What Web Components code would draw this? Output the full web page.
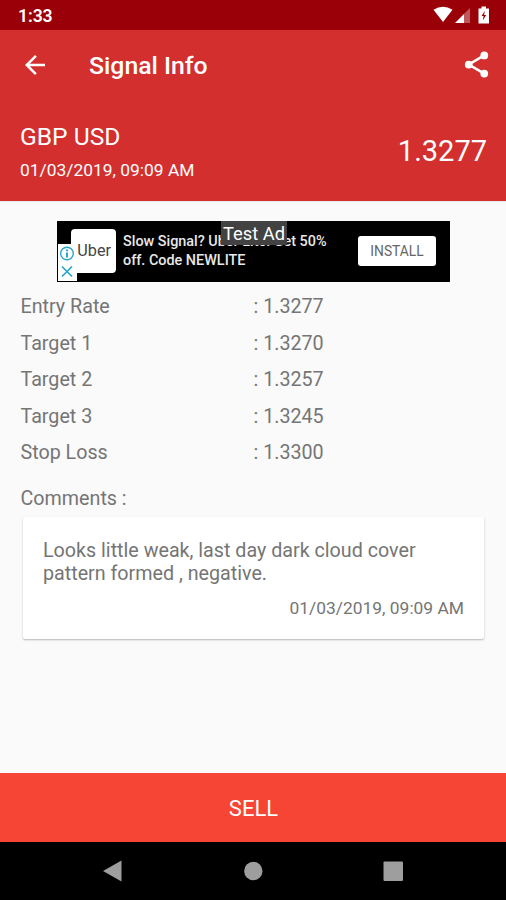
<!DOCTYPE html>
<html lang="en">
<head>
<meta charset="utf-8">
<title>Signal Info</title>
<style>
  html, body {
    margin: 0;
    height: 100%;
    overflow: hidden;
  }

  body {
    font-family: Roboto, "Liberation Sans", sans-serif;
    --color-primary: #d32f2f;
    --color-primary-dark: #9a0007;
    --color-sell: #f64435;
    --color-text: #757575;
    --color-background: #fafafa;
  }
</style>
</head>
<body>
<signal-screen></signal-screen>

<script>
class BaseElement extends HTMLElement {
  constructor() {
    super();
    const template = document.createElement("template");
    template.innerHTML = this.constructor.markup;
    this.attachShadow({ mode: "open" });
    this.shadowRoot.append(template.content.cloneNode(true));
  }
}

class StatusBar extends BaseElement {
  static markup = `
<style>
  :host {
    display: flex;
    align-items: center;
    justify-content: space-between;
    box-sizing: border-box;
    height: 30px;
    padding: 0 15px 0 18px;
    background: var(--color-primary-dark);
    color: #fff;
    font-size: 17.6px;
    font-weight: 600;
    letter-spacing: -0.1px;
  }

  .time {
    padding-top: 2px;
  }

  svg {
    display: block;
    fill: #fff;
  }
</style>
<span class="time"><slot></slot></span>
<svg width="58" height="30" viewBox="0 0 58 30">
  <path d="M.5 9.7Q10 3.9 19.5 9.7L10 22z" />
  <path d="M22 23L31 14V23z" />
  <path d="M31 14L37 8V23H31z" opacity=".35" />
  <path d="M45.5 8.5H48.5V6.5H53V8.5H56V23.5H45.5z" />
  <path d="M51.8 11L48.6 16H50.6L49.8 20.5L53.2 15H51.1z" fill="#9a0007" />
</svg>
`;
}

class AppToolbar extends BaseElement {
  static markup = `
<style>
  :host {
    display: flex;
    align-items: center;
    box-sizing: border-box;
    height: 70px;
    padding: 0 14px 0 20px;
    color: #fff;
  }

  svg {
    display: block;
    fill: #fff;
  }

  .share {
    margin-top: -2px;
  }

  .title {
    flex: 1;
    margin-left: 39px;
    font-size: 24.8px;
    font-weight: 500;
    line-height: 30px;
    padding-top: 1px;
  }
</style>
<svg width="30" height="30" viewBox="0 0 24 24">
  <path d="M20 11H7.83l5.59-5.59L12 4l-8 8 8 8 1.41-1.41L7.83 13H20v-2z" />
</svg>
<span class="title"><slot></slot></span>
<svg class="share" width="31" height="31" viewBox="0 0 24 24">
  <path d="M18 5L6 12L18 19" fill="none" stroke="#fff" stroke-width="2" />
  <circle cx="18" cy="5" r="3" />
  <circle cx="6" cy="12" r="3" />
  <circle cx="18" cy="19" r="3" />
</svg>
`;
}

class SignalHeader extends BaseElement {
  static markup = `
<style>
  :host {
    display: flex;
    align-items: center;
    justify-content: space-between;
    box-sizing: border-box;
    height: 101px;
    padding: 0 19px 0 20px;
    color: #fff;
  }

  .info {
    padding-top: 5px;
  }

  .pair {
    font-size: 24.6px;
    line-height: 34px;
  }

  .date {
    font-size: 17.4px;
    line-height: 32px;
  }

  .rate {
    font-size: 29px;
  }
</style>
<div class="info">
  <div class="pair"><slot name="pair"></slot></div>
  <div class="date"><slot name="date"></slot></div>
</div>
<div class="rate"><slot name="rate"></slot></div>
`;
}

class AdBanner extends BaseElement {
  static markup = `
<style>
  :host {
    position: relative;
    display: flex;
    align-items: center;
    box-sizing: border-box;
    width: 393px;
    height: 61px;
    margin: 0 56px 0 57px;
    padding: 0 14px;
    background: #000;
    color: #fff;
  }

  .logo {
    width: 45px;
    height: 44px;
    border-radius: 4px;
    background: #fff;
    color: #444;
    font-size: 16.2px;
    line-height: 43px;
    text-align: right;
    padding-right: 5px;
    box-sizing: border-box;
  }

  .copy {
    flex: 1;
    margin-left: 7px;
    font-size: 14.4px;
    font-weight: 500;
    line-height: 19.5px;
    white-space: nowrap;
    color: #e8e8e8;
  }

  .install {
    width: 78px;
    height: 30px;
    border-radius: 3px;
    background: #fff;
    color: #666;
    font-size: 13.8px;
    line-height: 30px;
    text-align: center;
  }

  .choices {
    position: absolute;
    left: 1px;
    bottom: 1px;
    width: 19px;
    height: 37px;
    background: #fff;
  }

  .test {
    position: absolute;
    left: 164px;
    top: 0;
    width: 66px;
    height: 24px;
    background: #424242;
    font-size: 18.3px;
    line-height: 26px;
    text-align: center;
    white-space: nowrap;
  }
</style>
<div class="logo"><slot name="logo"></slot></div>
<div class="copy"><slot></slot></div>
<div class="install"><slot name="action"></slot></div>
<svg class="choices" viewBox="0 0 19 37" fill="none" stroke="#2ba5c9" stroke-width="1.4">
  <circle cx="9" cy="9.5" r="6.3" />
  <path d="M9 8.5V13.5M9 5.5V7.2" stroke-width="2" />
  <path d="M4 22.5L14 32.5M14 22.5L4 32.5" stroke-width="1.7" />
</svg>
<div class="test"><slot name="label"></slot></div>
`;
}

class SignalRow extends BaseElement {
  static markup = `
<style>
  :host {
    display: grid;
    grid-template-columns: 233px 1fr;
    align-items: center;
    height: 36.6px;
    font-size: 19.7px;
  }
</style>
<span><slot name="label"></slot></span>
<span>: <slot></slot></span>
`;
}

class CommentCard extends BaseElement {
  static markup = `
<style>
  :host {
    display: block;
    box-sizing: border-box;
    height: 122px;
    padding: 22px 20px 0;
    border-radius: 2px;
    background: #fff;
    box-shadow: 0 1px 2px rgba(0, 0, 0, 0.28);
  }

  .text {
    font-size: 19.7px;
    line-height: 23px;
  }

  .date {
    margin-top: 12px;
    font-size: 17.4px;
    line-height: 23px;
    text-align: right;
  }
</style>
<div class="text"><slot></slot></div>
<div class="date"><slot name="date"></slot></div>
`;
}

class ActionButton extends BaseElement {
  static markup = `
<style>
  :host {
    display: flex;
    align-items: center;
    justify-content: center;
    height: 69.5px;
    padding: 2px 0 0 1px;
    box-sizing: border-box;
    background: var(--color-sell);
    color: #fff;
    font-size: 22px;
  }
</style>
<slot></slot>
`;
}

class NavBar extends BaseElement {
  static markup = `
<style>
  :host {
    display: flex;
    align-items: center;
    justify-content: space-between;
    box-sizing: border-box;
    height: 58px;
    padding: 0 102px;
    background: #000;
  }

  svg {
    display: block;
    width: 22px;
    height: 22px;
    fill: #9e9e9e;
  }
</style>
<svg viewBox="0 0 22 22"><path d="M1 11L19.5 .5V21.5z" /></svg>
<svg viewBox="0 0 22 22"><circle cx="11.3" cy="11" r="9.2" /></svg>
<svg viewBox="0 0 22 22"><rect x="1.5" y="1.5" width="19.5" height="19.5" rx="1" /></svg>
`;
}

class SignalScreen extends BaseElement {
  static markup = `
<style>
  :host {
    display: flex;
    flex-direction: column;
    height: 900px;
    background: var(--color-background);
    color: var(--color-text);
  }

  header {
    background: var(--color-primary);
    box-shadow: 0 1px 1px rgba(0, 0, 0, 0.06);
  }

  main {
    flex: 1;
    padding-top: 19.6px;
  }

  .rows {
    padding: 6.6px 20px 0 20.5px;
  }

  .heading {
    padding: 16px 20px 0 20.5px;
    font-size: 19.7px;
    line-height: 24px;
  }

  comment-card {
    margin: 5.6px 22px 0 23px;
  }
</style>
<status-bar>1:33</status-bar>
<header>
  <app-toolbar>Signal Info</app-toolbar>
  <signal-header>
    <span slot="pair">GBP USD</span>
    <span slot="date">01/03/2019, 09:09 AM</span>
    <span slot="rate">1.3277</span>
  </signal-header>
</header>
<main>
  <ad-banner>
    <span slot="logo">Uber</span>
    Slow Signal? Uber Lite. Get 50%<br>off. Code NEWLITE
    <span slot="action">INSTALL</span>
    <span slot="label">Test Ad</span>
  </ad-banner>
  <div class="rows">
    <signal-row><span slot="label">Entry Rate</span>1.3277</signal-row>
    <signal-row><span slot="label">Target 1</span>1.3270</signal-row>
    <signal-row><span slot="label">Target 2</span>1.3257</signal-row>
    <signal-row><span slot="label">Target 3</span>1.3245</signal-row>
    <signal-row><span slot="label">Stop Loss</span>1.3300</signal-row>
  </div>
  <div class="heading">Comments :</div>
  <comment-card>
    Looks little weak, last day dark cloud cover pattern formed , negative.
    <span slot="date">01/03/2019, 09:09 AM</span>
  </comment-card>
</main>
<action-button>SELL</action-button>
<nav-bar></nav-bar>
`;
}

customElements.define("status-bar", StatusBar);
customElements.define("app-toolbar", AppToolbar);
customElements.define("signal-header", SignalHeader);
customElements.define("ad-banner", AdBanner);
customElements.define("signal-row", SignalRow);
customElements.define("comment-card", CommentCard);
customElements.define("action-button", ActionButton);
customElements.define("nav-bar", NavBar);
customElements.define("signal-screen", SignalScreen);
</script>
</body>
</html>
